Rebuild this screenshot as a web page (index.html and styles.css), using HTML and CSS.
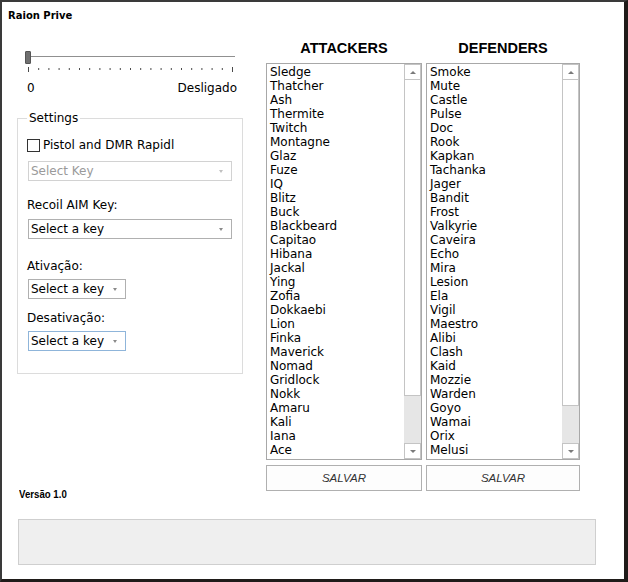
FILE: index.html
```html
<!DOCTYPE html>
<html lang="pt-br">
<head>
    <meta charset="UTF-8">
    <meta name="viewport" content="width=device-width, initial-scale=1.0">
    <title>Raion Prive</title>
    <link rel="stylesheet" href="styles.css">
</head>
<body>
    <div id="janela">
        <p id="titulo">Raion Prive</p>
        <div id="principal">
            <div id="esquerda">
                <div class="slider">
                    <div class="trilho"><span class="cursor"></span></div>
                    <svg class="marcas" width="208" height="6" viewBox="0 0 208 6">
                        <g stroke="#4a4a4a" stroke-width="1">
                            <line x1="1.5" y1="0" x2="1.5" y2="5"/>
                            <line x1="11.7" y1="1" x2="11.7" y2="3"/>
                            <line x1="21.9" y1="1" x2="21.9" y2="3"/>
                            <line x1="32.1" y1="1" x2="32.1" y2="3"/>
                            <line x1="42.3" y1="1" x2="42.3" y2="3"/>
                            <line x1="52.5" y1="1" x2="52.5" y2="3"/>
                            <line x1="62.7" y1="1" x2="62.7" y2="3"/>
                            <line x1="72.9" y1="1" x2="72.9" y2="3"/>
                            <line x1="83.1" y1="1" x2="83.1" y2="3"/>
                            <line x1="93.3" y1="1" x2="93.3" y2="3"/>
                            <line x1="103.5" y1="1" x2="103.5" y2="3"/>
                            <line x1="113.7" y1="1" x2="113.7" y2="3"/>
                            <line x1="123.9" y1="1" x2="123.9" y2="3"/>
                            <line x1="134.1" y1="1" x2="134.1" y2="3"/>
                            <line x1="144.3" y1="1" x2="144.3" y2="3"/>
                            <line x1="154.5" y1="1" x2="154.5" y2="3"/>
                            <line x1="164.7" y1="1" x2="164.7" y2="3"/>
                            <line x1="174.9" y1="1" x2="174.9" y2="3"/>
                            <line x1="185.1" y1="1" x2="185.1" y2="3"/>
                            <line x1="195.3" y1="1" x2="195.3" y2="3"/>
                            <line x1="205.5" y1="0" x2="205.5" y2="5"/>
                        </g>
                    </svg>
                    <div class="valores"><span>0</span><span>Desligado</span></div>
                </div>

                <fieldset class="grupo">
                    <legend>Settings</legend>
                    <label class="check"><span class="caixa"></span>Pistol and DMR Rapidl</label>
                    <div class="combo largo desativado">Select Key</div>
                    <p class="rotulo r1">Recoil AIM Key:</p>
                    <div class="combo largo">Select a key</div>
                    <p class="rotulo r2">Ativação:</p>
                    <div class="combo curto">Select a key</div>
                    <p class="rotulo r3">Desativação:</p>
                    <div class="combo curto foco">Select a key</div>
                </fieldset>

                <p id="versao"><span>Versão 1.0</span></p>
            </div>

            <div id="direita">
                <div class="coluna c1">
                    <h2>ATTACKERS</h2>
                    <div class="lista">
                        <ul>
                            <li>Sledge</li><li>Thatcher</li><li>Ash</li><li>Thermite</li>
                            <li>Twitch</li><li>Montagne</li><li>Glaz</li><li>Fuze</li>
                            <li>IQ</li><li>Blitz</li><li>Buck</li><li>Blackbeard</li>
                            <li>Capitao</li><li>Hibana</li><li>Jackal</li><li>Ying</li>
                            <li>Zofia</li><li>Dokkaebi</li><li>Lion</li><li>Finka</li>
                            <li>Maverick</li><li>Nomad</li><li>Gridlock</li><li>Nokk</li>
                            <li>Amaru</li><li>Kali</li><li>Iana</li><li>Ace</li>
                        </ul>
                        <div class="barra">
                            <span class="seta cima"></span>
                            <span class="polegar" style="height: 316px"></span>
                            <span class="pista"></span>
                            <span class="seta baixo"></span>
                        </div>
                    </div>
                    <button>SALVAR</button>
                </div>
                <div class="coluna c2">
                    <h2>DEFENDERS</h2>
                    <div class="lista">
                        <ul>
                            <li>Smoke</li><li>Mute</li><li>Castle</li><li>Pulse</li>
                            <li>Doc</li><li>Rook</li><li>Kapkan</li><li>Tachanka</li>
                            <li>Jager</li><li>Bandit</li><li>Frost</li><li>Valkyrie</li>
                            <li>Caveira</li><li>Echo</li><li>Mira</li><li>Lesion</li>
                            <li>Ela</li><li>Vigil</li><li>Maestro</li><li>Alibi</li>
                            <li>Clash</li><li>Kaid</li><li>Mozzie</li><li>Warden</li>
                            <li>Goyo</li><li>Wamai</li><li>Orix</li><li>Melusi</li>
                        </ul>
                        <div class="barra">
                            <span class="seta cima"></span>
                            <span class="polegar" style="height: 326px"></span>
                            <span class="pista"></span>
                            <span class="seta baixo"></span>
                        </div>
                    </div>
                    <button>SALVAR</button>
                </div>
            </div>
        </div>
        <div id="status"></div>
    </div>
</body>
</html>
```

FILE: styles.css
```css
body{
    margin: 0;
    background: #1e1a18;
}
#janela{
    box-sizing: border-box;
    width: 628px;
    height: 582px;
    background-color: #fff;
    border-style: solid;
    border-color: #3a3a3a #1f1b19 #1f1b19 #3a3a3a;
    border-width: 2px 4px 3px 2px;
    overflow: hidden;
    font-family: "DejaVu Sans", Verdana, sans-serif;
    font-size: 12px;
    color: #000;
}
#titulo{
    margin: 0;
    padding: 7px 0 0 6px;
    font-size: 10px;
    font-weight: bold;
    line-height: 14px;
}
#principal{
    display: flex;
    margin-top: 16px;
    padding-left: 15px;
}
#esquerda{
    width: 226px;
    display: flex;
    flex-direction: column;
}

/* slider */
.slider{
    padding: 0 6px 0 10px;
    margin-top: 11px;
}
.trilho{
    position: relative;
    width: 208px;
    height: 14px;
    background: linear-gradient(#909090, #909090) 0 6px / 100% 1px no-repeat;
}
.cursor{
    position: absolute;
    left: -2px;
    top: 1px;
    width: 6px;
    height: 13px;
    box-sizing: border-box;
    background-color: #707070;
    border: 1px solid #555;
    border-radius: 1px;
}
.marcas{
    display: block;
    margin-top: 3px;
}
.valores{
    display: flex;
    justify-content: space-between;
    margin-top: 8px;
    line-height: 14px;
}

/* group */
.grupo{
    margin: 16px 0 0 0;
    padding: 0 9px 22px;
    border: 1px solid #dcdcdc;
    min-width: 0;
}
.grupo legend{
    padding: 0 2px;
    line-height: 14px;
}
.check{
    display: flex;
    align-items: center;
    margin-top: 13px;
    line-height: 14px;
}
.caixa{
    box-sizing: border-box;
    width: 13px;
    height: 13px;
    border: 1px solid #333;
    margin-right: 3px;
}
.rotulo{
    margin: 0;
    line-height: 14px;
}
.r1{ margin-top: 17px; }
.r2{ margin-top: 20px; }
.r3{ margin-top: 12px; }
.combo{
    position: relative;
    box-sizing: border-box;
    height: 20px;
    margin-left: 1px;
    padding-left: 2px;
    border: 1px solid #b0b0b0;
    line-height: 18px;
    background-color: #fff;
}
.combo::after{
    content: "";
    position: absolute;
    right: 8px;
    top: 8px;
    border-left: 2.5px solid transparent;
    border-right: 2.5px solid transparent;
    border-top: 3px solid #8a8a8a;
}
.largo{
    width: 204px;
    margin-top: 7px;
}
.desativado{
    margin-top: 9px;
    color: #9a9a9a;
    border-color: #d2d2d2;
}
.desativado::after{
    border-top-color: #c0c0c0;
}
.curto{
    width: 98px;
    margin-top: 6px;
}
.foco{
    border-color: #8fb5da;
}
#versao{
    margin: auto 0 0 2px;
    font-family: "Liberation Sans", Arial, sans-serif;
    font-size: 11.5px;
    font-weight: bold;
    line-height: 12px;
}
#versao span{
    display: inline-block;
    transform: scaleX(0.84);
    transform-origin: left center;
}

/* lists */
#direita{
    display: flex;
    gap: 4px;
    margin-left: 23px;
    padding-bottom: 9px;
}
.coluna{
    display: flex;
    flex-direction: column;
}
.c1{ width: 156px; }
.c2{ width: 154px; }
.coluna h2{
    margin: 0 0 6px;
    font-family: "Liberation Sans", Arial, sans-serif;
    font-size: 14.5px;
    font-weight: bold;
    line-height: 18px;
    text-align: center;
}
.lista{
    display: flex;
    box-sizing: border-box;
    height: 397px;
    border: 1px solid #a8a8a8;
}
.lista ul{
    flex: 1;
    margin: 0;
    padding: 1px 0 0 3px;
    list-style: none;
    overflow: hidden;
    line-height: 14px;
}
.barra{
    width: 17px;
    display: flex;
    flex-direction: column;
}
.seta{
    box-sizing: border-box;
    height: 16px;
    border: 1px solid #c4c4c4;
    background-color: #fff;
    display: flex;
    justify-content: center;
    align-items: center;
}
.seta::after{
    content: "";
    border-left: 3px solid transparent;
    border-right: 3px solid transparent;
}
.cima::after{ border-bottom: 3px solid #7a7a7a; }
.baixo::after{ border-top: 3px solid #7a7a7a; }
.polegar{
    box-sizing: border-box;
    border: 1px solid #c4c4c4;
    border-top: none;
    background-color: #fff;
}
.pista{
    flex: 1;
    background-color: #e6e6e6;
}
.coluna button{
    margin-top: 5px;
    height: 26px;
    border: 1px solid #b0b0b0;
    background-color: #fdfdfd;
    font-family: "Liberation Sans", Arial, sans-serif;
    font-size: 11.5px;
    font-style: italic;
    color: #333;
}
#status{
    box-sizing: border-box;
    width: 578px;
    height: 46px;
    margin: 19px 0 0 16px;
    background-color: #efefef;
    border: 1px solid #cfcfcf;
}
```
